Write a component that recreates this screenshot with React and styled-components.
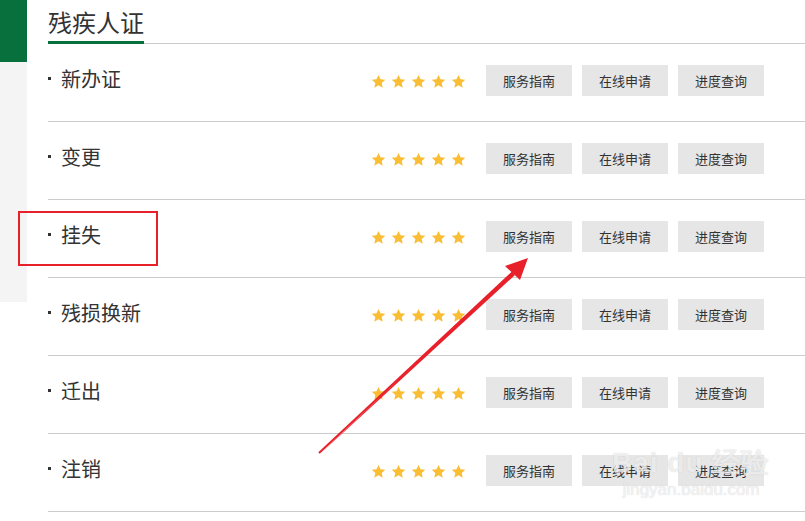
import styled, { createGlobalStyle } from 'styled-components';

const GlobalStyle = createGlobalStyle`
  html, body {
    margin: 0;
    padding: 0;
    background: #FFFFFF;
    font-family: "Noto Sans CJK SC", "Noto Sans", sans-serif;
    color: #333333;
  }
`;

const Page = styled.div`
  position: relative;
  display: flex;
  width: 805px;
  height: 521px;
  overflow: hidden;
`;

const Sidebar = styled.aside`
  width: 27px;
  flex-shrink: 0;
  display: flex;
  flex-direction: column;

  &::before {
    content: "";
    height: 62px;
    background-color: #08703C;
  }
  &::after {
    content: "";
    height: 240px;
    background-color: #F4F4F4;
  }
`;

const Main = styled.main`
  flex: 1;
  margin-left: 21px;
`;

const Header = styled.div`
  display: flex;
  align-items: flex-end;
  height: 44px;
  border-bottom: 1px solid #CCCCCC;
  box-sizing: border-box;
`;

const Title = styled.h2`
  margin: 0 0 -1px 0;
  padding: 0;
  font-size: 24px;
  font-weight: 400;
  line-height: 38px;
  color: #333333;
  border-bottom: 3px solid #08703C;
`;

const Row = styled.div`
  display: flex;
  align-items: center;
  height: 78px;
  padding: 0 41px 5px 0;
  border-bottom: 1px solid #CCCCCC;
  box-sizing: border-box;
`;

const Name = styled.div`
  flex: 1;
  display: flex;
  align-items: center;
  gap: 10px;
  font-size: 20px;
  color: #333333;
  padding-bottom: 3px;

  &::before {
    content: "";
    width: 3px;
    height: 3px;
    background: #333333;
  }
`;

const Stars = styled.div`
  display: flex;
  gap: 5px;
  margin-right: 20px;
  margin-top: 2px;
`;

const Buttons = styled.div`
  display: flex;
  gap: 10px;
`;

const Button = styled.button`
  width: 86px;
  height: 31px;
  border: none;
  background: #E6E6E6;
  color: #333333;
  font-family: inherit;
  font-size: 13px;
  padding: 0;
  cursor: pointer;
`;

const Highlight = styled.div`
  position: absolute;
  left: 18px;
  top: 211px;
  width: 140px;
  height: 55px;
  border: 2px solid #E8202A;
  box-sizing: border-box;
  pointer-events: none;
`;

const Arrow = styled.svg`
  position: absolute;
  left: 0;
  top: 0;
  pointer-events: none;
`;

const Watermark = styled.div`
  position: absolute;
  left: 612px;
  top: 446px;
  display: flex;
  flex-direction: column;
  align-items: center;
  color: rgba(255, 255, 255, 0.7);
  text-shadow: 0 0 1px rgba(130, 130, 130, 0.4);
  font-family: "Liberation Sans", Arial, sans-serif;
  pointer-events: none;
`;

const WatermarkTop = styled.div`
  font-size: 28px;
  font-weight: 700;
  line-height: 34px;
  letter-spacing: 1px;
`;

const WatermarkBottom = styled.div`
  font-size: 17px;
  line-height: 20px;
`;

function Star() {
  return (
    <svg width="15" height="15" viewBox="0 0 24 24">
      <path
        d="M12 1.5l3.2 7 7.6.8-5.7 5.1 1.6 7.5L12 18l-6.7 3.9 1.6-7.5L1.2 9.3l7.6-.8z"
        fill="#F9BE33"
      />
    </svg>
  );
}

const items = ['新办证', '变更', '挂失', '残损换新', '迁出', '注销'];
const actions = ['服务指南', '在线申请', '进度查询'];

export default function App() {
  return (
    <>
      <GlobalStyle />
      <Page>
        <Sidebar />
        <Main>
          <Header>
            <Title>残疾人证</Title>
          </Header>
          {items.map((item) => (
            <Row key={item}>
              <Name>{item}</Name>
              <Stars>
                {[0, 1, 2, 3, 4].map((i) => <Star key={i} />)}
              </Stars>
              <Buttons>
                {actions.map((a) => <Button key={a}>{a}</Button>)}
              </Buttons>
            </Row>
          ))}
        </Main>
        <Highlight />
        <Arrow width="805" height="521">
          <path d="M320 454 L512 272 L515 275 Z" fill="#E8202A" />
          <path d="M319 453 L514 271" stroke="#E8202A" strokeWidth="2" />
          <path d="M528 258 L505 266 L520 280 Z" fill="#E8202A" />
        </Arrow>
        <Watermark>
          <WatermarkTop>Bai du 经验</WatermarkTop>
          <WatermarkBottom>jingyan.baidu.com</WatermarkBottom>
        </Watermark>
      </Page>
    </>
  );
}
